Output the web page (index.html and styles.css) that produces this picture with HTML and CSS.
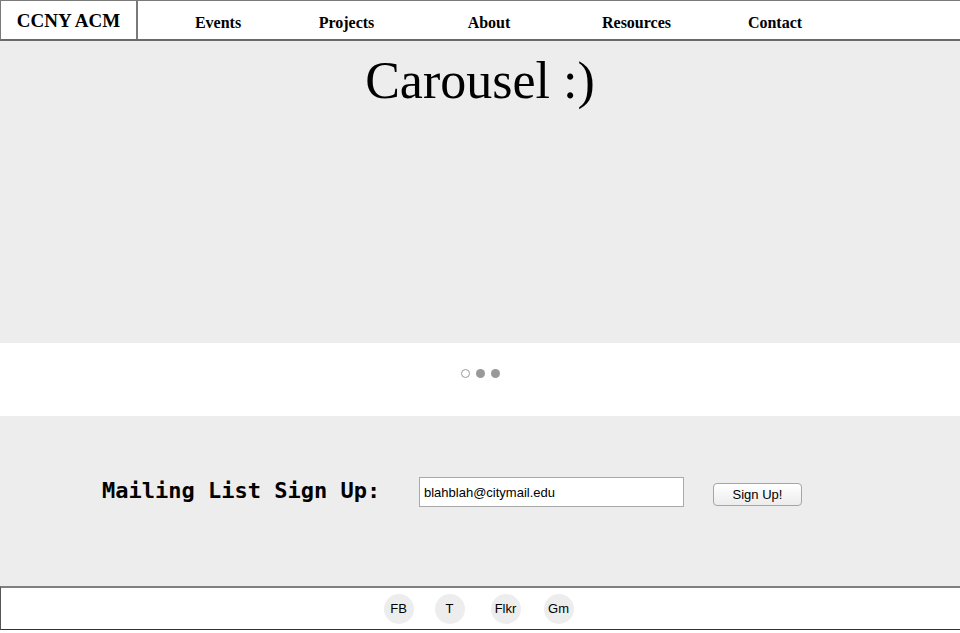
FILE: index.html
```html
<!DOCTYPE html>
<html lang="en">
<head>
<meta charset="utf-8">
<title>CCNY ACM</title>
<link rel="stylesheet" href="styles.css">
</head>
<body>
<header class="site-header">
  <div class="logo">CCNY ACM</div>
  <nav class="main-nav">
    <a class="nav-link nav-events" href="#">Events</a>
    <a class="nav-link nav-projects" href="#">Projects</a>
    <a class="nav-link nav-about" href="#">About</a>
    <a class="nav-link nav-resources" href="#">Resources</a>
    <a class="nav-link nav-contact" href="#">Contact</a>
  </nav>
</header>
<section class="carousel">
  <h1 class="carousel-title">Carousel :)</h1>
</section>
<div class="carousel-dots">
  <span class="dot dot-active"></span>
  <span class="dot"></span>
  <span class="dot"></span>
</div>
<section class="signup">
  <label class="signup-label" for="email">Mailing List Sign Up:</label>
  <input class="signup-input" id="email" type="text" value="blahblah@citymail.edu">
  <button class="signup-button" type="button">Sign Up!</button>
</section>
<footer class="site-footer">
  <a class="social social-fb" href="#">FB</a>
  <a class="social social-t" href="#">T</a>
  <a class="social social-flkr" href="#">Flkr</a>
  <a class="social social-gm" href="#">Gm</a>
</footer>
</body>
</html>
```
FILE: styles.css
```css
* { box-sizing: border-box; }
html, body { margin: 0; padding: 0; background: #fff; }
body { font-family: "Liberation Serif", serif; color: #000; }

.site-header {
  display: flex;
  align-items: stretch;
  height: 41px;
  border-top: 1px solid #7a7a7a;
  border-bottom: 2px solid #6a6a6a;
  border-left: 1px solid #7a7a7a;
  background: #fff;
}
.logo {
  width: 137px;
  display: flex;
  align-items: center;
  justify-content: center;
  font-weight: bold;
  font-size: 19px;
  border-right: 2px solid #7a7a7a;
  padding-top: 2px;
}
.main-nav {
  display: flex;
  align-items: center;
  padding-top: 6px;
}
.nav-link {
  display: block;
  width: 120px;
  text-align: center;
  color: #000;
  text-decoration: none;
  font-weight: bold;
  font-size: 16px;
}
.nav-events { margin-left: 20px; }
.nav-projects { margin-left: 8.5px; }
.nav-about { margin-left: 22.5px; }
.nav-resources { margin-left: 27.5px; }
.nav-contact { margin-left: 18.5px; }

.carousel {
  height: 302px;
  background: #ededed;
  padding-top: 10px;
}
.carousel-title {
  margin: 0;
  text-align: center;
  font-weight: normal;
  font-size: 52px;
  line-height: 60px;
}

.carousel-dots {
  height: 73px;
  display: flex;
  align-items: flex-start;
  justify-content: center;
  gap: 6px;
  padding-top: 26px;
}
.dot {
  width: 9px;
  height: 9px;
  border-radius: 50%;
  background: #999;
}
.dot-active {
  background: #fff;
  border: 1px solid #999;
}

.signup {
  height: 170px;
  background: #ededed;
  display: flex;
  align-items: flex-start;
  padding-top: 61px;
  padding-left: 102px;
}
.signup-label {
  width: 317px;
  font-family: "DejaVu Sans Mono", monospace;
  font-weight: bold;
  font-size: 22px;
  line-height: 28px;
}
.signup-input {
  width: 265px;
  height: 30px;
  margin: 0;
  border: 1px solid #a9a9a9;
  padding: 0 4px;
  font-family: "Liberation Sans", Arial, sans-serif;
  font-size: 13px;
  color: #000;
  background: #fff;
}
.signup-button {
  margin: 6px 0 0 29px;
  width: 89px;
  height: 23px;
  border: 1px solid #a5a5a5;
  border-radius: 4px;
  background: linear-gradient(#ffffff, #ececec);
  font-family: "Liberation Sans", Arial, sans-serif;
  font-size: 13px;
  color: #000;
  padding: 0;
}

.site-footer {
  height: 44px;
  border-top: 2px solid #808080;
  border-bottom: 1px solid #333;
  border-left: 1px solid #555;
  display: flex;
  align-items: center;
  justify-content: center;
  padding-right: 4px;
}
.social {
  width: 30px;
  height: 30px;
  border-radius: 50%;
  background: #ededed;
  display: flex;
  align-items: center;
  justify-content: center;
  font-family: "Liberation Sans", Arial, sans-serif;
  font-size: 13px;
  color: #000;
  text-decoration: none;
}
.social-t { margin-left: 21px; }
.social-flkr { margin-left: 26px; }
.social-gm { margin-left: 23px; }
```
